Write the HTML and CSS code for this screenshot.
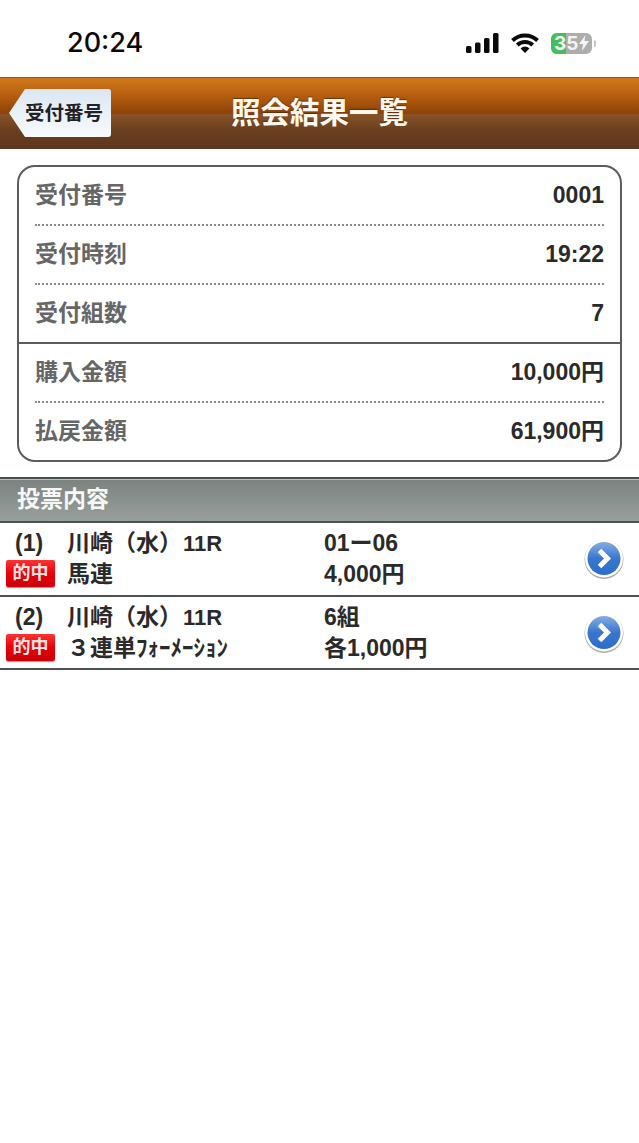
FILE: index.html
```html
<!DOCTYPE html>
<html lang="ja">

<head>
  <meta charset="UTF-8">
  <meta name="viewport" content="width=device-width, initial-scale=1.0">
  <title>照会結果一覧</title>
  <link rel="stylesheet" href="styles.css">
</head>

<body>
  <div class="status">
    <span class="status__time">20:24</span>
    <div class="status__icons">
      <svg class="status__signal" width="33" height="20" viewBox="0 0 33 20">
        <rect x="0" y="13" width="5.5" height="7" rx="1.5" />
        <rect x="9" y="9.5" width="5.5" height="10.5" rx="1.5" />
        <rect x="18" y="5" width="5.5" height="15" rx="1.5" />
        <rect x="27" y="0" width="5.5" height="20" rx="1.5" />
      </svg>
      <svg class="status__wifi" width="28" height="20" viewBox="0 0 28 20">
        <path d="M1.5 7.5a18 18 0 0 1 25 0" />
        <path d="M6.3 12a11.4 11.4 0 0 1 15.4 0" />
        <path class="status__wifi-dot" d="M14 20l-4.400-4.600a6.200 6.200 0 0 1 8.800 0z" />
      </svg>
      <div class="battery">
        <div class="battery__level"></div>
        <span class="battery__text">35</span>
        <svg class="battery__bolt" width="10" height="16" viewBox="0 0 10 16">
          <path d="M6.500 0L0 9h4l-1 7 7-10H5.500z" />
        </svg>
      </div>
      <div class="battery__tip"></div>
    </div>
  </div>

  <header class="header">
    <a class="back">
      <svg class="back__shape" width="104" height="48" viewBox="0 0 104 48">
        <defs>
          <linearGradient id="backFill" x1="0" y1="0" x2="0" y2="1">
            <stop offset="0" stop-color="#dbe6f2" />
            <stop offset="1" stop-color="#f8fafd" />
          </linearGradient>
        </defs>
        <path d="M17 0H100a3 3 0 0 1 3 3V45a3 3 0 0 1-3 3H17L1 24z" fill="url(#backFill)" />
      </svg>
      <span class="back__text">受付番号</span>
    </a>
    <h1 class="header__title">照会結果一覧</h1>
  </header>

  <main>
    <section class="summary">
      <div class="summary__row summary__row--dotted">
        <span class="summary__label">受付番号</span>
        <span class="summary__value">0001</span>
      </div>
      <div class="summary__row summary__row--dotted">
        <span class="summary__label">受付時刻</span>
        <span class="summary__value">19:22</span>
      </div>
      <div class="summary__row summary__row--solid">
        <span class="summary__label">受付組数</span>
        <span class="summary__value">7</span>
      </div>
      <div class="summary__row summary__row--dotted">
        <span class="summary__label">購入金額</span>
        <span class="summary__value">10,000円</span>
      </div>
      <div class="summary__row summary__row--last">
        <span class="summary__label">払戻金額</span>
        <span class="summary__value">61,900円</span>
      </div>
    </section>

    <h2 class="section-title">投票内容</h2>

    <div class="ticket">
      <span class="ticket__num">(1)</span>
      <span class="ticket__race">川崎（水）<span class="ticket__round">11R</span></span>
      <span class="ticket__detail">01ー06</span>
      <span class="ticket__badge">的中</span>
      <span class="ticket__type">馬連</span>
      <span class="ticket__detail">4,000円</span>
      <svg class="ticket__arrow" width="40" height="40" viewBox="0 0 40 40">
        <defs>
          <linearGradient id="arrowFill" x1="0" y1="0" x2="0" y2="1">
            <stop offset="0" stop-color="#86aee4" />
            <stop offset="0.5" stop-color="#3a76cc" />
            <stop offset="1" stop-color="#2c6ccd" />
          </linearGradient>
        </defs>
        <circle cx="20" cy="20.500" r="19.500" fill="#777" opacity="0.6" />
        <circle cx="20" cy="19.500" r="19" fill="#fff" />
        <circle cx="20" cy="19.500" r="16.500" fill="url(#arrowFill)" />
        <path d="M15.500 11.500l8 8-8 8" fill="none" stroke="#fff" stroke-width="5" />
      </svg>
    </div>

    <div class="ticket">
      <span class="ticket__num">(2)</span>
      <span class="ticket__race">川崎（水）<span class="ticket__round">11R</span></span>
      <span class="ticket__detail">6組</span>
      <span class="ticket__badge">的中</span>
      <span class="ticket__type">３連単<span class="ticket__narrow">ﾌｫｰﾒｰｼｮﾝ</span></span>
      <span class="ticket__detail">各1,000円</span>
      <svg class="ticket__arrow" width="40" height="40" viewBox="0 0 40 40">
        <circle cx="20" cy="20.500" r="19.500" fill="#777" opacity="0.6" />
        <circle cx="20" cy="19.500" r="19" fill="#fff" />
        <circle cx="20" cy="19.500" r="16.500" fill="url(#arrowFill)" />
        <path d="M15.500 11.500l8 8-8 8" fill="none" stroke="#fff" stroke-width="5" />
      </svg>
    </div>
  </main>
</body>

</html>
```

FILE: styles.css
```css
body {
  margin: 0;
  background-color: #fff;
  color: #2a2a2a;
  font-family: "Liberation Sans", "Noto Sans CJK JP", sans-serif;
  font-weight: bold;
}

.status {
  height: 77px;
  display: flex;
  justify-content: space-between;
  padding: 0 43px 0 67px;
  box-sizing: border-box;
}

.status__time {
  margin-top: 27px;
  font-family: "Inter", sans-serif;
  font-size: 27px;
  line-height: 32px;
  font-weight: 500;
  color: #0a0a0a;
}

.status__icons {
  display: flex;
  align-items: center;
  height: 22px;
  margin-top: 32px;
}

.status__signal {
  fill: #0a0a0a;
  margin-right: 12px;
}

.status__wifi {
  margin-right: 12px;
}

.status__wifi path {
  fill: none;
  stroke: #0a0a0a;
  stroke-width: 4;
}

.status__wifi .status__wifi-dot {
  fill: #0a0a0a;
  stroke: none;
}

.battery {
  position: relative;
  width: 41px;
  height: 21px;
  border-radius: 6px;
  background-color: #adadad;
  overflow: hidden;
  display: flex;
  align-items: center;
}

.battery__level {
  position: absolute;
  top: 0;
  bottom: 0;
  left: 0;
  width: 15px;
  background-color: #45bf5e;
}

.battery__text {
  position: relative;
  margin-left: 3px;
  font-family: "Inter", sans-serif;
  font-size: 19px;
  line-height: 21px;
  color: #f4f4f4;
}

.battery__bolt {
  position: relative;
  margin-left: 1px;
  fill: #f4f4f4;
}

.battery__tip {
  width: 2px;
  height: 7px;
  margin-left: 2px;
  border-radius: 0 2px 2px 0;
  background-color: #c4c4c4;
}

.header {
  position: relative;
  height: 72px;
  box-sizing: border-box;
  border-top: 1px solid #9b5a1e;
  background: linear-gradient(#d07a1e 0%, #b9610f 22%, #8e4209 50%, #8a5428 50%, #6b4020 72%, #5c361c 100%);
  display: flex;
  align-items: center;
  justify-content: center;
}

.back {
  position: absolute;
  left: 8px;
  top: 11px;
  width: 103px;
  height: 48px;
  display: flex;
  align-items: center;
}

.back__shape {
  position: absolute;
  left: 0;
  top: 0;
}

.back__text {
  position: relative;
  margin-left: 17px;
  font-size: 19.500px;
  line-height: 24px;
  color: #1f2226;
}

.header__title {
  margin: 0 0 2px;
  font-size: 29.500px;
  line-height: 36px;
  font-weight: bold;
  color: #fdf8ef;
  text-shadow: 0 -1px 1px rgba(60, 30, 0, 0.6);
}

.summary {
  margin: 16px 17px 15px;
  border: 2px solid #5c5c5c;
  border-radius: 18px;
}

.summary__row {
  height: 59px;
  box-sizing: border-box;
  margin: 0 16px;
  padding-top: 13px;
  display: flex;
  align-items: baseline;
  justify-content: space-between;
  font-size: 23px;
  line-height: 30px;
}

.summary__row--dotted {
  border-bottom: 2px dotted #8a8a8a;
}

.summary__row--solid {
  margin: 0;
  padding-left: 16px;
  padding-right: 16px;
  border-bottom: 2px solid #5c5c5c;
}

.summary__row--last {
  height: 57px;
}

.summary__label {
  color: #666;
}

.summary__value {
  color: #2a2a2a;
}

.section-title {
  margin: 0;
  height: 46px;
  box-sizing: border-box;
  padding-left: 17px;
  border-top: 2px solid #4a5052;
  border-bottom: 2px solid #4f5253;
  background: linear-gradient(#7b827f, #97a09c);
  box-shadow: inset 0 1px 0 #b8bebc;
  font-size: 23px;
  line-height: 41px;
  font-weight: bold;
  color: #f7f7f7;
}

.ticket {
  position: relative;
  height: 73.500px;
  box-sizing: border-box;
  border-bottom: 2px solid #4f5253;
  padding-top: 5px;
  display: grid;
  grid-template-columns: 67px 257px 1fr;
  grid-template-rows: 31px 31px;
  align-items: baseline;
  font-size: 23px;
  line-height: 31px;
}

.ticket__num {
  padding-left: 15px;
}

.ticket__round {
  margin-left: 1px;
  font-size: 22px;
}

.ticket__badge {
  align-self: center;
  justify-self: start;
  margin-left: 6px;
  margin-bottom: 2px;
  width: 49px;
  height: 27px;
  border-radius: 2px;
  background: linear-gradient(#f33, #e8000c 50%, #c8000a);
  box-shadow: 0 1px 1px rgba(0, 0, 0, 0.4);
  color: #f5e4e4;
  font-size: 18px;
  line-height: 27px;
  text-align: center;
}

.ticket__arrow {
  position: absolute;
  right: 15px;
  top: 16px;
}
```
